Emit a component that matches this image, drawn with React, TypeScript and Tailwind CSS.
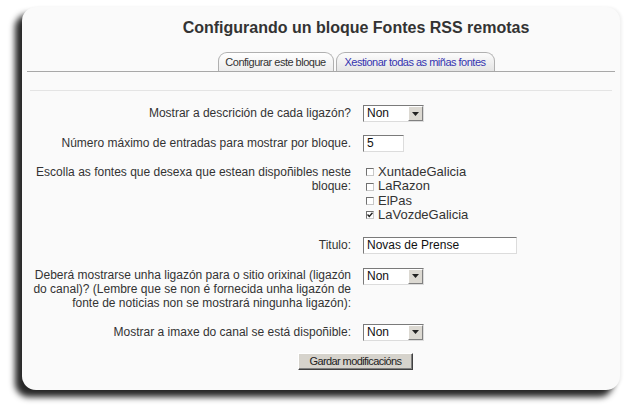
import React from "react";

const font = { fontFamily: '"Liberation Sans", Arial, sans-serif' };

function Arrow() {
  return (
    <div className="flex h-[15px] w-[15px] items-center justify-center border border-t-[#ffffff] border-l-[#ffffff] border-r-[#808080] border-b-[#808080] bg-[#dcd9d2]">
      <svg width="7" height="4" viewBox="0 0 7 4">
        <path d="M0 0 L7 0 L3.5 4 Z" fill="#222" />
      </svg>
    </div>
  );
}

function Select() {
  return (
    <div className="flex h-[17px] w-[61px] border border-t-[#7a7a7a] border-l-[#7a7a7a] border-r-[#dcdcdc] border-b-[#dcdcdc] bg-white">
      <div className="flex-1 pl-[3px] text-[12px] leading-[15px] text-[#111]">Non</div>
      <Arrow />
    </div>
  );
}

function TextInput({ value, width }: { value: string; width: string }) {
  return (
    <div
      className={`h-[17px] ${width} border border-t-[#7a7a7a] border-l-[#7a7a7a] border-r-[#dcdcdc] border-b-[#dcdcdc] bg-white pl-[3px] text-[12px] leading-[15px] text-[#111]`}
    >
      {value}
    </div>
  );
}

function Check({ label, checked }: { label: string; checked?: boolean }) {
  return (
    <div className="flex items-center gap-[4px] h-[14.4px]">
      <div className="flex h-[8px] w-[8px] items-center justify-center border border-t-[#707070] border-l-[#707070] border-r-[#c8c8c8] border-b-[#c8c8c8] bg-white">
        {checked && (
          <svg width="6" height="6" viewBox="0 0 6 6">
            <path d="M0.5 2.5 L2.3 4.5 L5.5 0.8" stroke="#222" strokeWidth="1.4" fill="none" />
          </svg>
        )}
      </div>
      <span className="text-[13px] leading-[14.4px] text-[#333]">{label}</span>
    </div>
  );
}

function Row({
  label,
  children,
  labelPad = "pt-[1px]",
  className = "",
}: {
  label: React.ReactNode;
  children: React.ReactNode;
  labelPad?: string;
  className?: string;
}) {
  return (
    <div className={`flex items-start gap-[12px] ${className}`}>
      <div className={`w-[320px] text-right text-[12px] leading-[14px] text-[#333] ${labelPad}`}>{label}</div>
      <div>{children}</div>
    </div>
  );
}

export default function App() {
  return (
    <div className="h-[414px] w-[630px] overflow-hidden bg-white pt-[7px] pl-[22px]" style={font}>
      <div className="h-[383px] w-[598px] rounded-[14px] bg-[#fafafa] shadow-[-7px_7px_6px_rgba(0,0,0,0.85),2px_0px_3px_rgba(0,0,0,0.06)] pt-[11px]">
        <div className="pl-[70px] text-center text-[16px] font-bold leading-[19px] text-[#333]">
          Configurando un bloque Fontes RSS remotas
        </div>
        <div className="mx-[5px] mt-[15px] flex justify-center gap-[2px] border-b border-[#a8a8a8] pl-[70px]">
          <div className="flex h-[19px] w-[116px] items-center justify-center rounded-t-[9px] border border-b-0 border-[#b0b0b0] bg-gradient-to-b from-[#ffffff] to-[#ececec] text-[11px] tracking-[-0.5px] text-[#333]">
            Configurar este bloque
          </div>
          <div className="flex h-[19px] w-[159px] items-center justify-center rounded-t-[9px] border border-b-0 border-[#b0b0b0] bg-gradient-to-b from-[#fcfcfc] to-[#e4e4e4] text-[11px] tracking-[-0.5px] text-[#3434b0]">
            Xestionar todas as miñas fontes
          </div>
        </div>
        <div className="mx-[8px] h-[19px] border-b border-[#e4e4e4]" />
        <div className="mt-[14px] flex flex-col pl-[9px]">
          <Row label="Mostrar a descrición de cada ligazón?">
            <Select />
          </Row>
          <Row label="Número máximo de entradas para mostrar por bloque." className="mt-[13px]">
            <TextInput value="5" width="w-[41px]" />
          </Row>
          <Row label="Escolla as fontes que desexa que estean dispoñibles neste bloque:" labelPad="pt-0" className="mt-[13px]">
            <div className="flex flex-col pl-[3px]">
              <Check label="XuntadeGalicia" />
              <Check label="LaRazon" />
              <Check label="ElPas" />
              <Check label="LaVozdeGalicia" checked />
            </div>
          </Row>
          <Row label="Titulo:" className="mt-[14px]">
            <TextInput value="Novas de Prense" width="w-[154px]" />
          </Row>
          <Row
            label="Deberá mostrarse unha ligazón para o sitio orixinal (ligazón do canal)? (Lembre que se non é fornecida unha ligazón de fonte de noticias non se mostrará ningunha ligazón):"
            labelPad="pt-0"
            className="mt-[14px]"
          >
            <Select />
          </Row>
          <Row label="Mostrar a imaxe do canal se está dispoñible:" className="mt-[14px]">
            <Select />
          </Row>
          <div className="mt-[12px] pl-[267px]">
            <div className="flex h-[17px] w-[115px] items-center justify-center border border-t-[#ffffff] border-l-[#ffffff] border-r-[#404040] border-b-[#404040] bg-[#d6d3cc] text-[11px] tracking-[-0.6px] text-[#222] shadow-[inset_-1px_-1px_0_#808080]">
              Gardar modificacións
            </div>
          </div>
        </div>
      </div>
    </div>
  );
}
